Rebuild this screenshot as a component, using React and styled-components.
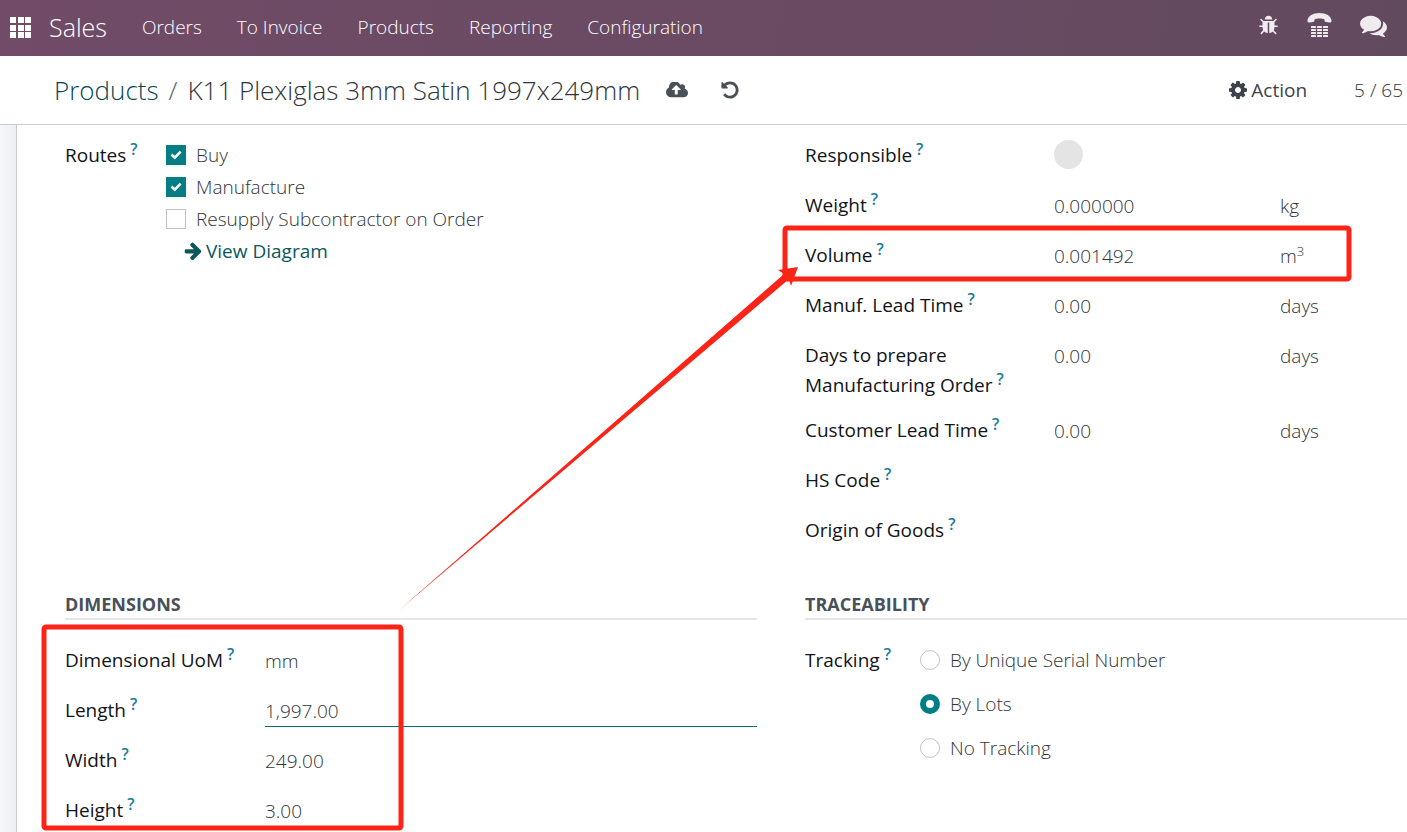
import React, { useState } from 'react';
import styled, { createGlobalStyle } from 'styled-components';

const GlobalStyle = createGlobalStyle`
  * {
    box-sizing: border-box;
  }

  body {
    margin: 0;
    background: #fff;
    color: #2f343a;
    font-family: "Open Sans", "Noto Sans", sans-serif;
    font-size: 19px;
    font-weight: 300;
    line-height: 30px;
    overflow: hidden;
  }

  button, input {
    font: inherit;
    color: inherit;
  }
`;

const Page = styled.div`
  min-height: 100vh;
  display: flex;
  flex-direction: column;
`;

const Navbar = styled.header`
  display: flex;
  align-items: center;
  height: 56px;
  padding: 0 20px 2px 10px;
  color: #fff;
  background: linear-gradient(100deg, #714b67, #624a5e);
`;

const IconButton = styled.button`
  display: flex;
  padding: 0;
  border: 0;
  background: none;
  cursor: pointer;
`;

const Brand = styled.a`
  margin: 0 35px 0 18px;
  color: inherit;
  font-size: 25px;
  text-decoration: none;
`;

const Menu = styled.nav`
  display: flex;
  flex: 1;
  gap: 35px;
`;

const MenuLink = styled.a`
  color: inherit;
  text-decoration: none;
  white-space: nowrap;
`;

const Systray = styled.div`
  display: flex;
  align-items: center;
  gap: 28px;
  padding-bottom: 4px;
  color: #f0ebee;
`;

const ControlPanel = styled.div`
  display: flex;
  align-items: center;
  height: 69px;
  padding: 0 4px 0 54px;
  border-bottom: 1px solid #c9ccd2;
  white-space: nowrap;
`;

const Breadcrumb = styled.div`
  display: flex;
  gap: 10px;
  margin-right: 26px;
  font-size: 26px;
`;

const BreadcrumbLink = styled.a`
  color: #00494f;
  text-decoration: none;
`;

const Separator = styled.span`
  color: #5a6068;
`;

const FormActions = styled.div`
  display: flex;
  flex: 1;
  align-items: center;
  gap: 32px;
  color: #495057;
`;

const ActionButton = styled(IconButton)`
  align-items: center;
  gap: 4px;
  margin-right: 47px;
  color: #3d434a;
  font-weight: 500;
`;

const Content = styled.main`
  display: flex;
  flex: 1;
  background: linear-gradient(90deg, #f6f7fa, #eeeff4 16px);
`;

const Sheet = styled.div`
  flex: 1;
  margin-left: 16px;
  padding: 15px 0 0 48px;
  border-left: 1px solid #c9ccd2;
  background: #fff;
`;

const Columns = styled.div`
  display: grid;
  grid-template-columns: 692fr 602fr;
  column-gap: 48px;
`;

const Group = styled.section`
  min-height: ${props => props.$minHeight || 0}px;
`;

const GroupTitle = styled.h2`
  margin: 0 0 25px;
  border-bottom: 2px solid #e4e6e9;
  color: #495057;
  font-size: 18px;
  font-weight: 700;
  line-height: 28px;
  text-transform: uppercase;
`;

const Row = styled.div`
  display: grid;
  grid-template-columns: ${props => props.$labelWidth}px minmax(0, 1fr);
  margin-bottom: ${props => props.$gap || 20}px;
`;

const Label = styled.label`
  color: #111418;
  font-weight: 500;
`;

const Help = styled.sup`
  margin-left: 4px;
  color: #1b7d9c;
  font-size: 16px;
  font-weight: 600;
  line-height: 0;
`;

const Field = styled.div`
  display: flex;
  height: 30px;
  padding-top: 1px;
`;

const TextInput = styled.input`
  flex: ${props => (props.$short ? '0 0 226px' : '1')};
  min-width: 0;
  height: 31px;
  padding: 0;
  border: 0;
  border-bottom: 1px solid ${props => (props.$active ? '#017077' : 'transparent')};
  outline: 0;
  background: none;
`;

const Unit = styled.span`
  sup {
    font-size: 13px;
    line-height: 0;
  }
`;

const Avatar = styled.span`
  width: 29px;
  height: 29px;
  margin-top: -1px;
  border-radius: 50%;
  background: #e4e4e4;
`;

const Options = styled.div`
  display: flex;
  flex-direction: column;
  gap: ${props => props.$gap}px;
`;

const Option = styled.label`
  display: flex;
  align-items: center;
  gap: 10px;
`;

const Checkbox = styled.input`
  appearance: none;
  width: 20px;
  height: 20px;
  margin: 0;
  border: 1px solid #bfc2c6;

  &:checked {
    border-color: #017e84;
    background: #017e84 url("data:image/svg+xml,%3Csvg xmlns='http://www.w3.org/2000/svg' viewBox='0 0 20 20'%3E%3Cpath d='M5.5 9.5l3.2 3.2 6-6' fill='none' stroke='white' stroke-width='2.6'/%3E%3C/svg%3E") center / 20px;
  }
`;

const Radio = styled.input`
  appearance: none;
  width: 20px;
  height: 20px;
  margin: 0;
  border: 1px solid #bfc2c6;
  border-radius: 50%;

  &:checked {
    border: 6px solid #017e84;
  }
`;

const DiagramLink = styled.a`
  display: flex;
  align-items: center;
  gap: 4px;
  padding-left: 18px;
  color: #0b575c;
  font-weight: 500;
  text-decoration: none;
`;

const Annotations = styled.svg`
  position: absolute;
  top: 0;
  left: 0;
  pointer-events: none;
`;

const paths = {
  bug: 'M1696 960q0 26-19 45t-45 19h-224q0 171-67 290l208 209q19 19 19 45t-19 45q-18 19-45 19t-45-19l-198-197q-5 5-15 13t-42 28.5-65 36.5-82 29-97 13v-896h-128v896q-51 0-101.5-13.5t-87-33-66-39-43.5-32.5l-15-14-183 207q-20 21-48 21-24 0-43-16-19-18-20.5-44.5t15.5-46.5l202-227q-58-114-58-274h-224q-26 0-45-19t-19-45 19-45 45-19h224v-294l-173-173q-19-19-19-45t19-45 45-19 45 19l173 173h844l173-173q19-19 45-19t45 19 19 45-19 45l-173 173v294h224q26 0 45 19t19 45zm-480-576h-640q0-133 93.5-226.5t226.5-93.5 226.5 93.5 93.5 226.5z',
  comments: 'M1408 768q0 139-94 257t-256.5 186.5-353.5 68.5q-86 0-176-16-124 88-278 128-36 9-86 16h-3q-11 0-20.5-8t-11.5-21q-1-3-1-6.5t.5-6.5 2-6l2.5-5 3.5-5.5 4-5 4.5-5 4-4.5q5-6 23-25t26-29.5 22.5-29 25-38.5 20.5-44q-124-72-195-177t-71-224q0-139 94-257t256.5-186.5 353.5-68.5 353.5 68.5 256.5 186.5 94 257zm384 256q0 120-71 224.5t-195 176.5q10 24 20.5 44t25 38.5 22.5 29 26 29.5 23 25q1 1 4 4.5t4.5 5 4 5 3.5 5.5l2.5 5 2 6 .5 6.5-1 6.5q-3 14-13 22t-22 7q-50-7-86-16-154-40-278-128-90 16-176 16-271 0-472-132 58 4 88 4 161 0 309-45t264-129q125-92 192-212t67-254q0-77-23-152 129 71 204 178t75 230z',
  cog: 'M1152 896q0-106-75-181t-181-75-181 75-75 181 75 181 181 75 181-75 75-181zm512-109v222q0 12-8 23t-20 13l-185 28q-19 54-39 91 35 50 107 138 10 12 10 25t-9 23q-27 37-99 108t-94 71q-12 0-26-9l-138-108q-44 23-91 38-16 136-29 186-7 28-36 28h-222q-14 0-24.5-8.5t-11.5-21.5l-28-184q-49-16-90-37l-141 107q-10 9-25 9-14 0-25-11-126-114-165-168-7-10-7-23 0-12 8-23 15-21 51-66.5t54-70.5q-27-50-41-99l-183-27q-13-2-21-12.5t-8-23.5v-222q0-12 8-23t19-13l186-28q14-46 39-92-40-57-107-138-10-12-10-24 0-10 9-23 26-36 98.5-107.5t94.5-71.5q13 0 26 10l138 107q44-23 91-38 16-136 29-186 7-28 36-28h222q14 0 24.5 8.5t11.5 21.5l28 184q49 16 90 37l142-107q9-9 24-9 13 0 25 10 129 119 165 170 7 8 7 22 0 12-8 23-15 21-51 66.5t-54 70.5q26 50 41 98l183 28q13 2 21 12.5t8 23.5z',
  upload: 'M1280 864q0-14-9-23l-352-352q-9-9-23-9t-23 9l-351 351q-10 12-10 24 0 14 9 23t23 9h224v352q0 13 9.5 22.5t22.5 9.5h192q13 0 22.5-9.5t9.5-22.5v-352h224q13 0 22.5-9.5t9.5-22.5zm640 288q0 159-112.5 271.5t-271.5 112.5h-1088q-185 0-316.5-131.5t-131.5-316.5q0-130 70-240t188-165q-2-30-2-43 0-212 150-362t362-150q156 0 285.5 87t188.5 231q71-62 166-62 106 0 181 75t75 181q0 76-41 138 130 31 213.5 135.5t83.5 238.5z',
  undo: 'M1664 896q0 156-61 298t-164 245-245 164-298 61q-172 0-327-72.5t-264-204.5q-7-10-6.5-22.5t8.5-20.5l137-138q10-9 25-9 16 2 23 12 73 95 179 147t225 52q104 0 198.5-40.5t163.5-109.5 109.5-163.5 40.5-198.5-40.5-198.5-109.5-163.5-163.5-109.5-198.5-40.5q-98 0-188 35.5t-160 101.5l137 138q31 30 14 69-17 40-59 40h-448q-26 0-45-19t-19-45v-448q0-42 40-59 39-17 69 14l130 129q107-101 244.5-156.5t284.5-55.5q156 0 298 61t245 164 164 245 61 298z',
  arrow: 'M1600 960q0 54-37 91l-651 651q-39 37-91 37-51 0-90-37l-75-75q-38-38-38-91t38-91l293-293h-704q-52 0-84.5-37.5t-32.5-90.5v-128q0-53 32.5-90.5t84.5-37.5h704l-293-294q-38-36-38-90t38-90l75-75q38-38 90-38 53 0 91 38l651 651q37 35 37 90z',
};

const Icon = ({ name, width, height, box = '0 0 1792 1792' }) => (
  <svg width={width} height={height} viewBox={box} fill="currentColor" aria-hidden="true">
    <path d={paths[name]} />
  </svg>
);

const AppsIcon = () => (
  <svg width="21" height="21" fill="#fff" aria-hidden="true">
    {[0, 8, 15].map(y => [0, 8, 15].map(x => (
      <rect key={`${x}-${y}`} x={x} y={y} width="6" height="6" />
    )))}
  </svg>
);

const PhoneIcon = () => (
  <svg width="25" height="24" viewBox="0 0 25 24" fill="currentColor" aria-hidden="true">
    <path d="M0.5 7.5C0.8 3 6 0 12.500 0S24.200 3 24.500 7.500C24.600 9 24 9.600 22.500 9.500L19 9C17.600 8.700 17.500 8 17.400 6.300C15 5.300 10 5.300 7.600 6.300C7.500 8 7.400 8.700 6 9L2.500 9.500C1 9.600 0.400 9 0.500 7.500Z" />
    {[13, 16, 19, 22].map(y => [4, 10, 16].map(x => (
      <rect key={`${x}-${y}`} x={x} y={y} width="5" height="2" rx="0.5" />
    )))}
  </svg>
);

const logistics = [
  { id: 'weight', label: 'Weight', value: '0.000000', unit: 'kg' },
  { id: 'volume', label: 'Volume', value: '0.001492', unit: <>m<sup>3</sup></> },
  { id: 'manuf-lead', label: 'Manuf. Lead Time', value: '0.00', unit: 'days' },
  { id: 'prepare', label: <>Days to prepare<br />Manufacturing Order</>, value: '0.00', unit: 'days', gap: 15 },
  { id: 'customer-lead', label: 'Customer Lead Time', value: '0.00', unit: 'days' },
  { id: 'hs-code', label: 'HS Code', value: '' },
  { id: 'origin', label: 'Origin of Goods', value: '' },
];

const dimensions = [
  { id: 'uom', label: 'Dimensional UoM', value: 'mm' },
  { id: 'length', label: 'Length', value: '1,997.00', active: true },
  { id: 'width', label: 'Width', value: '249.00' },
  { id: 'height', label: 'Height', value: '3.00' },
];

const routes = ['Buy', 'Manufacture', 'Resupply Subcontractor on Order'];
const trackings = ['By Unique Serial Number', 'By Lots', 'No Tracking'];

const FieldRow = ({ field, labelWidth }) => (
  <Row $labelWidth={labelWidth} $gap={field.gap}>
    <Label htmlFor={field.id}>{field.label}<Help>?</Help></Label>
    <Field>
      <TextInput id={field.id} defaultValue={field.value} $short={!!field.unit} $active={field.active} />
      {field.unit && <Unit>{field.unit}</Unit>}
    </Field>
  </Row>
);

const App = () => {
  const [tracking, setTracking] = useState('By Lots');

  return (
    <Page>
      <GlobalStyle />
      <Navbar>
        <IconButton aria-label="Apps"><AppsIcon /></IconButton>
        <Brand href="#">Sales</Brand>
        <Menu>
          {['Orders', 'To Invoice', 'Products', 'Reporting', 'Configuration'].map(item => (
            <MenuLink key={item} href="#">{item}</MenuLink>
          ))}
        </Menu>
        <Systray>
          <IconButton aria-label="Debug"><Icon name="bug" width={21} height={21} /></IconButton>
          <IconButton aria-label="Phone"><PhoneIcon /></IconButton>
          <IconButton aria-label="Messages"><Icon name="comments" width={27} height={27} /></IconButton>
        </Systray>
      </Navbar>

      <ControlPanel>
        <Breadcrumb>
          <BreadcrumbLink href="#">Products</BreadcrumbLink>
          <Separator>/</Separator>
          <span>K11 Plexiglas 3mm Satin 1997x249mm</span>
        </Breadcrumb>
        <FormActions>
          <IconButton aria-label="Save"><Icon name="upload" width={22} height={16} box="0 256 1920 1280" /></IconButton>
          <IconButton aria-label="Discard"><Icon name="undo" width={20} height={20} /></IconButton>
        </FormActions>
        <ActionButton><Icon name="cog" width={18} height={18} box="128 128 1536 1536" />Action</ActionButton>
        <span>5 / 65</span>
      </ControlPanel>

      <Content>
        <Sheet>
          <Columns>
            <Group $minHeight={450}>
              <Row $labelWidth={101} role="group" aria-label="Routes">
                <Label as="span">Routes<Help>?</Help></Label>
                <Options $gap={2}>
                  {routes.map((route, i) => (
                    <Option key={route}>
                      <Checkbox type="checkbox" defaultChecked={i < 2} />
                      {route}
                    </Option>
                  ))}
                  <DiagramLink href="#"><Icon name="arrow" width={18} height={18} box="64 128 1600 1600" />View Diagram</DiagramLink>
                </Options>
              </Row>
            </Group>
            <Group>
              <Row $labelWidth={249}>
                <Label as="span">Responsible<Help>?</Help></Label>
                <Field><Avatar /></Field>
              </Row>
              {logistics.map(field => <FieldRow key={field.id} field={field} labelWidth={249} />)}
            </Group>
            <Group>
              <GroupTitle>Dimensions</GroupTitle>
              {dimensions.map(field => <FieldRow key={field.id} field={field} labelWidth={200} />)}
            </Group>
            <Group>
              <GroupTitle>Traceability</GroupTitle>
              <Row $labelWidth={115} role="radiogroup" aria-label="Tracking">
                <Label as="span">Tracking<Help>?</Help></Label>
                <Options $gap={14}>
                  {trackings.map(name => (
                    <Option key={name}>
                      <Radio
                        type="radio"
                        name="tracking"
                        checked={tracking === name}
                        onChange={() => setTracking(name)}
                      />
                      {name}
                    </Option>
                  ))}
                </Options>
              </Row>
            </Group>
          </Columns>
        </Sheet>
      </Content>

      <Annotations width="1407" height="832" aria-hidden="true">
        <g fill="none" stroke="#fb2416" strokeWidth="5">
          <rect x="785" y="228" width="564" height="51" rx="2" />
          <rect x="44" y="627" width="357" height="201" rx="2" />
        </g>
        <path fill="#fb2416" d="M398 611L784 274L778 270L798 267L791 286L789 279Z" />
      </Annotations>
    </Page>
  );
};

export default App;
